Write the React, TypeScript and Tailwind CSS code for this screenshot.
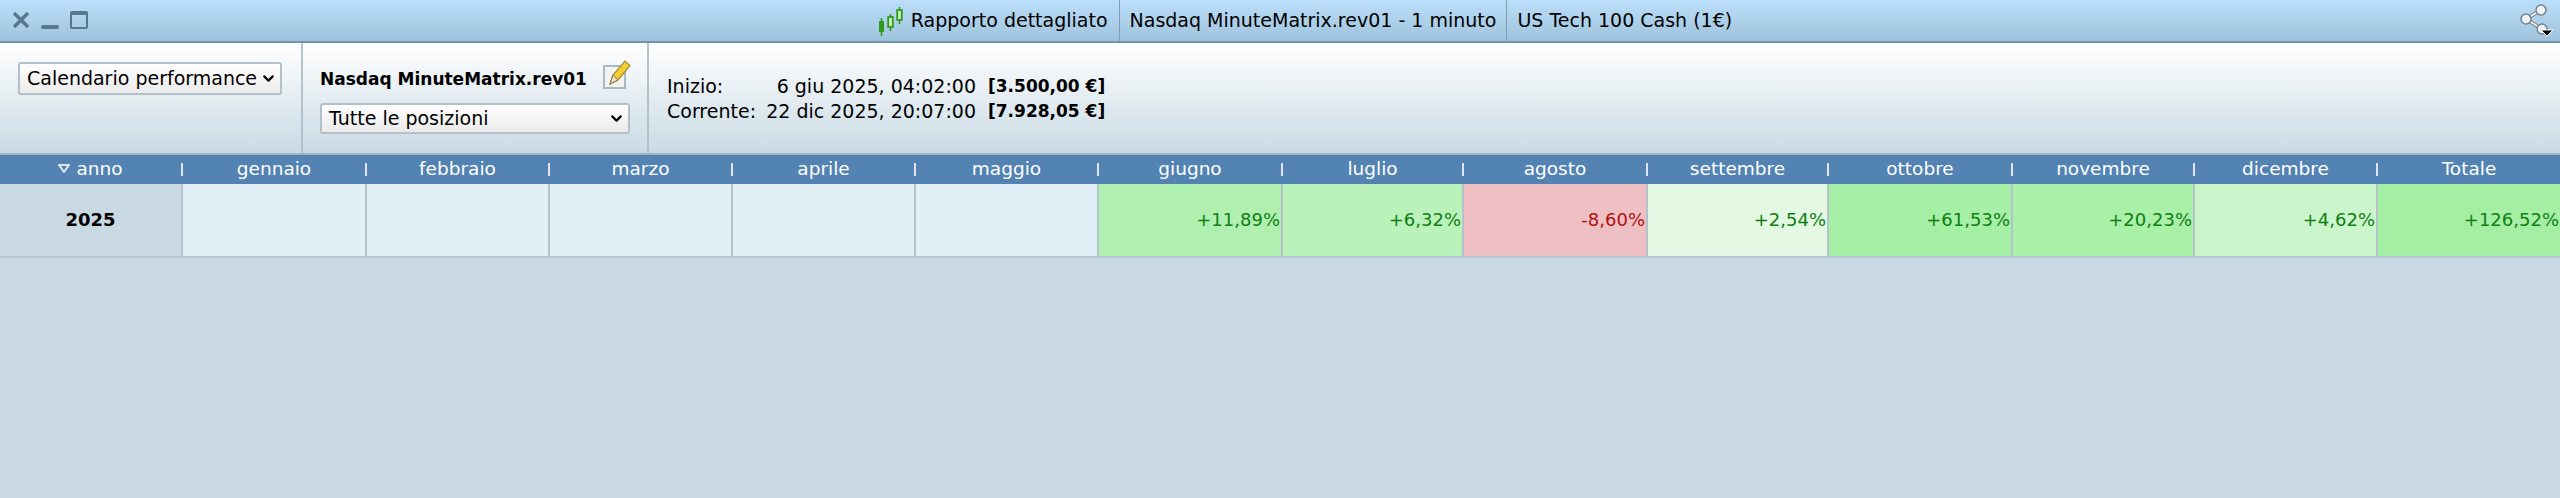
import { ChevronDown } from 'lucide-react'

const columns = 'grid grid-cols-[183px_184px_183px_183px_183px_183px_184px_181px_184px_181px_184px_182px_183px_1fr]'

const months = [
  { label: 'gennaio' },
  { label: 'febbraio' },
  { label: 'marzo' },
  { label: 'aprile' },
  { label: 'maggio' },
  { label: 'giugno', value: '+11,89%', bg: 'bg-[#aff0b0]' },
  { label: 'luglio', value: '+6,32%', bg: 'bg-[#bbf2bb]' },
  { label: 'agosto', value: '-8,60%', bg: 'bg-[#efc0c3]', loss: true },
  { label: 'settembre', value: '+2,54%', bg: 'bg-[#e3f9e3]' },
  { label: 'ottobre', value: '+61,53%', bg: 'bg-[#a6efa6]' },
  { label: 'novembre', value: '+20,23%', bg: 'bg-[#a9f0a9]' },
  { label: 'dicembre', value: '+4,62%', bg: 'bg-[#cbf6cc]' },
  { label: 'Totale', value: '+126,52%', bg: 'bg-[#a5efa4]' },
]

function Candles() {
  return (
    <svg width="26" height="30" viewBox="0 0 26 30" className="shrink-0">
      <path d="M3.500 12v18M12.500 8v17M21.500 1v17" stroke="#2f9a1c" strokeWidth="1.600" />
      <rect x="1" y="15" width="5" height="11" fill="#2f9a1c" />
      <rect x="10.200" y="11" width="4.600" height="10" fill="#cdeeb8" stroke="#2f9a1c" strokeWidth="1.800" />
      <rect x="19.200" y="4" width="4.600" height="10" fill="#cdeeb8" stroke="#2f9a1c" strokeWidth="1.800" />
    </svg>
  )
}

function ShareIcon() {
  return (
    <svg width="36" height="33" viewBox="0 0 36 33">
      <path d="M22 7 7 16l16 10" fill="none" stroke="#7f8d97" strokeWidth="4" />
      <path d="M22 7 7 16l16 10" fill="none" stroke="#f4f7f9" strokeWidth="1.500" />
      <circle cx="22" cy="7" r="5" fill="#eef2f5" stroke="#75838d" strokeWidth="1.500" />
      <circle cx="7" cy="16" r="5" fill="#eef2f5" stroke="#75838d" strokeWidth="1.500" />
      <circle cx="23" cy="26" r="5" fill="#eef2f5" stroke="#75838d" strokeWidth="1.500" />
      <path d="M22 27h12l-6 6z" fill="#000" stroke="#fff" strokeWidth="1" />
    </svg>
  )
}

function EditIcon() {
  return (
    <div className="relative w-[23px] h-[24px] border-2 border-[#a9b8c2] bg-[#f3f3f2]">
      <svg width="26" height="30" viewBox="0 0 26 30" className="absolute left-[2px] top-[-8px]">
        <path d="M3 25 6 16 18 2l5 4.500L11 21z" fill="#f5cf2d" stroke="#a58a3a" strokeWidth="1.200" />
        <path d="M3 25 6 16l5 5z" fill="#f0e0c0" stroke="#8a7550" strokeWidth="1" />
      </svg>
    </div>
  )
}

function Select({ label, className }: { label: string; className: string }) {
  return (
    <div className={`flex items-center justify-between pr-[3px] rounded-[3px] border-2 border-[#b3c0c9] bg-gradient-to-b from-[#ffffff] to-[#ebebeb] text-black text-[19px] ${className}`}>
      <span>{label}</span>
      <ChevronDown size={17} strokeWidth={3} />
    </div>
  )
}

export default function App() {
  return (
    <div className="w-[2560px] h-[498px] flex flex-col bg-[#c9dae4] text-[19px] text-black overflow-hidden font-['DejaVu_Sans','Liberation_Sans',sans-serif]">
      {/* title bar */}
      <div className="relative h-[43px] flex items-center justify-center pl-[60px] border-b-2 border-[#6f95b0] bg-gradient-to-b from-[#bbdffa] to-[#9fc3dc]">
        <div className="absolute left-[12px] top-[11px] flex items-end gap-[11px] text-[#56788f]">
          <svg width="18" height="18" viewBox="0 0 18 18"><path d="M2 2l14 14M16 2 2 16" stroke="currentColor" strokeWidth="3.500" /></svg>
          <div className="w-[18px] h-[4px] rounded-sm bg-current" />
          <div className="w-[18px] h-[18px] border-2 border-t-[4px] border-current rounded-[2px]" />
        </div>
        <div className="flex items-stretch h-full">
          <div className="flex items-center gap-[7px] pr-[11px]">
            <Candles />
            <span>Rapporto dettagliato</span>
          </div>
          <div className="flex items-center px-[10px] border-l border-[#7c9fb8]">Nasdaq MinuteMatrix.rev01 - 1 minuto</div>
          <div className="flex items-center px-[10px] border-l border-[#7c9fb8]">US Tech 100 Cash (1€)</div>
        </div>
        <div className="absolute right-[5px] top-[3px]"><ShareIcon /></div>
      </div>

      {/* toolbar */}
      <div className="h-[112px] flex border-b-2 border-[#a7b5bf] bg-gradient-to-b from-[#ffffff] to-[#c9dae4]">
        <div className="w-[303px] pl-[18px] pt-[19px] border-r-2 border-[#b2c2cd]">
          <Select label="Calendario performance" className="w-[264px] h-[33px] pl-[7px]" />
        </div>
        <div className="w-[346px] pl-[17px] pt-[18px] border-r-2 border-[#b2c2cd]">
          <div className="flex items-center h-[32px] gap-[16px] text-[17px] font-bold">
            <span className="pt-[5px]">Nasdaq MinuteMatrix.rev01</span>
            <EditIcon />
          </div>
          <Select label="Tutte le posizioni" className="w-[310px] h-[31px] mt-[10px] pl-[7px]" />
        </div>
        <div className="pl-[18px] pt-[31px] leading-[25px]">
          <div className="flex">
            <span className="w-[92px]">Inizio:</span>
            <span className="w-[217px] text-right">6 giu 2025, 04:02:00</span>
            <span className="ml-[12px] font-bold text-[17px]">[3.500,00 €]</span>
          </div>
          <div className="flex">
            <span className="w-[92px]">Corrente:</span>
            <span className="w-[217px] text-right">22 dic 2025, 20:07:00</span>
            <span className="ml-[12px] font-bold text-[17px]">[7.928,05 €]</span>
          </div>
        </div>
      </div>

      {/* table header */}
      <div className={`h-[29px] bg-[#5283b3] text-white text-[18.500px] ${columns}`}>
        <div className="flex items-center">
          <span className="flex-1 flex items-center justify-center gap-[6px] pb-[2px]">
            <svg width="12" height="9" viewBox="0 0 12 9"><path d="M1 1h10L6 8z" fill="none" stroke="#fff" strokeWidth="1.500" /></svg>
            anno
          </span>
          <span className="w-[2px] h-[13px] bg-white/80" />
        </div>
        {months.map((m, i) => (
          <div key={m.label} className="flex items-center">
            <span className="flex-1 text-center pb-[2px]">{m.label}</span>
            {i < months.length - 1 && <span className="w-[2px] h-[13px] bg-white/80" />}
          </div>
        ))}
      </div>

      {/* year row */}
      <div className={`h-[74px] border-b-2 border-[#b7c6d0] text-[18px] ${columns}`}>
        <div className="flex items-center justify-center pb-[2px] font-bold bg-[#c8d9e4] border-r-2 border-[#b5c2cb]">2025</div>
        {months.map((m, i) => (
          <div
            key={m.label}
            className={`flex items-center justify-end pr-[1px] pb-[2px] ${m.bg ?? 'bg-[#e0eef6]'} ${m.loss ? 'text-[#b01010]' : 'text-[#0f7f12]'} ${i < months.length - 1 ? 'border-r-2 border-[#b5c2cb]' : ''}`}
          >
            {m.value}
          </div>
        ))}
      </div>
    </div>
  )
}
